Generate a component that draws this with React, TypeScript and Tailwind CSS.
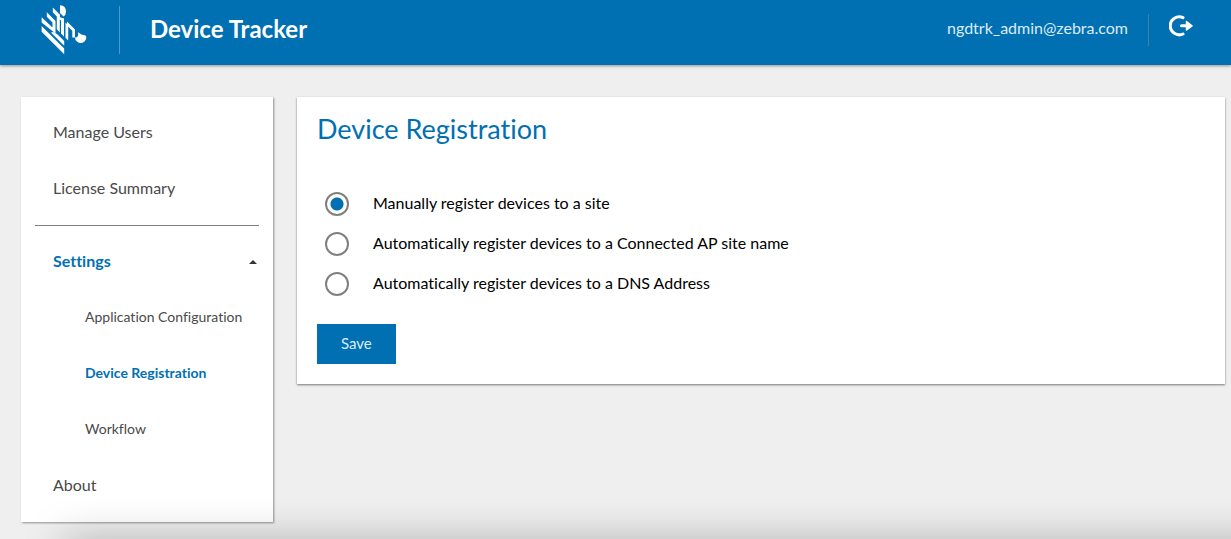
import { useState } from "react";

const options = [
  "Manually register devices to a site",
  "Automatically register devices to a Connected AP site name",
  "Automatically register devices to a DNS Address",
];

function ZebraLogo() {
  return (
    <svg width="48" height="52" viewBox="0 0 48 52" fill="#fff" role="img" aria-label="Zebra">
      <path d="M20 1.200Q26 1.500 26 7.500Q26 11 23.500 12.500L20 9Z" />
      <path d="M12.800 3.500L20 10.700V13.200L24 14.500V32.500L21 29.500V16.500L19.800 15.500V28.300L16.800 25.300V12.500L12.800 8.300Z" />
      <path d="M6.800 8.200L15.500 17V29.500L1.600 18.500V13.200L12.500 23.500V18.500L6.800 12.800Z" />
      <path d="M25.500 18.500L28.200 21.200V36.500L25.500 33.800Z" />
      <path d="M27 17.500L35 25.500V33.500H32.300V26.700L27 21.500Z" />
      <path d="M1.600 22L24.200 44.600V50.300L1.600 27.700Z" />
      <path d="M11 28.500L24.200 41.700V37L17 30L13 28Z" />
      <path d="M38 28.200L41.500 30.500L45.500 31.500Q47.500 34 44.500 37.500Q40.500 40.500 37 37.500Q34.800 35.500 35 33.500Q39 33.500 38 28.200Z" />
    </svg>
  );
}

function LogoutIcon() {
  return (
    <svg width="26" height="24" viewBox="0 0 26 24" fill="none" stroke="#fff" strokeWidth="3" strokeLinecap="round">
      <path d="M14 3.600A9 9 0 1 0 14 20" />
      <path d="M12.500 11.800H18" />
      <path d="M17.500 7.500L23 11.800L17.500 16Z" fill="#fff" strokeWidth="1.500" strokeLinejoin="round" />
    </svg>
  );
}

export default function App() {
  const [selected, setSelected] = useState(0);
  const [open, setOpen] = useState(true);
  return (
    <div className="min-h-screen overflow-hidden bg-[#efefef] pb-4 font-['Lato',sans-serif] text-base text-[#4a4a4a] [font-variant-ligatures:none]">
      <header className="flex h-[65px] items-start bg-[#0070b3] pl-10 pr-9 text-white shadow-[0_1px_3px_rgba(0,0,0,0.4)]">
        <div className="mt-1">
          <ZebraLogo />
        </div>
        <div className="ml-[31px] mt-[6px] flex h-12 items-center border-l border-[#4c9bca] pb-0.5 pl-[30px]">
          <h1 className="text-2xl font-bold">Device Tracker</h1>
        </div>
        <div className="ml-auto mt-[14px] flex h-8 items-start">
          <span className="pr-5 leading-7 text-[#dcebf5]">ngdtrk_admin@zebra.com</span>
          <button type="button" aria-label="Log out" className="flex h-8 items-start border-l border-[#3b83ae] pl-5">
            <LogoutIcon />
          </button>
        </div>
      </header>

      <div className="flex items-start gap-6 pl-[21px] pr-[6px] pt-8">
        <nav className="w-[252px] shrink-0 bg-white shadow-[1px_1px_2px_rgba(0,0,0,0.4)]">
          <div className="pb-2 pt-2">
            <a href="#users" className="flex h-14 items-center px-8 pb-0.5">Manage Users</a>
            <a href="#license" className="flex h-14 items-center px-8 pb-0.5">License Summary</a>
          </div>
          <div className="mx-[14px] border-t border-[#808080]" />
          <div className="pb-2 pt-2">
            <button
              type="button"
              aria-expanded={open}
              onClick={() => setOpen(!open)}
              className="flex h-14 w-full items-center justify-between pl-8 pr-4 font-bold text-[#0070b3]"
            >
              <span className="pb-0.5">Settings</span>
              <svg width="8" height="4" viewBox="0 0 8 4" fill="#333"><path d="M0 4L4 0L8 4Z" /></svg>
            </button>
            {open && (
              <div className="text-sm">
                <a href="#config" className="flex h-14 items-center pb-0.5 pl-16">Application Configuration</a>
                <a href="#registration" className="flex h-14 items-center pb-0.5 pl-16 font-bold text-[#0070b3]">Device Registration</a>
                <a href="#workflow" className="flex h-14 items-center pb-0.5 pl-16">Workflow</a>
              </div>
            )}
            <a href="#about" className="flex h-14 items-center px-8 pb-0.5">About</a>
          </div>
        </nav>

        <main className="min-w-0 grow bg-white px-5 pb-5 pt-4 shadow-[0_1px_2px_rgba(0,0,0,0.5)]">
          <h2 className="text-[27px] leading-8 text-[#0070b3]">Device Registration</h2>
          <form onSubmit={(e) => e.preventDefault()}>
            <div className="mt-[39px] flex flex-col px-2">
              {options.map((label, i) => (
                <label key={label} className="flex min-h-10 items-center gap-6 text-black">
                  <input
                    type="radio"
                    name="registration"
                    checked={selected === i}
                    onChange={() => setSelected(i)}
                    className="size-6 shrink-0 appearance-none rounded-full border-2 border-[#808080] checked:bg-[radial-gradient(circle,#0070b3_6px,transparent_7px)]"
                  />
                  <span className="pb-0.5">{label}</span>
                </label>
              ))}
            </div>
            <button type="submit" className="mt-5 h-10 bg-[#0070b3] px-6 pb-0.5 text-[15px] text-[#dcebf5]">Save</button>
          </form>
        </main>
      </div>
      <div className="pointer-events-none fixed -bottom-24 -right-16 left-[64px] h-24 shadow-[0_0_40px_rgba(0,0,0,0.25)]" />
    </div>
  );
}
